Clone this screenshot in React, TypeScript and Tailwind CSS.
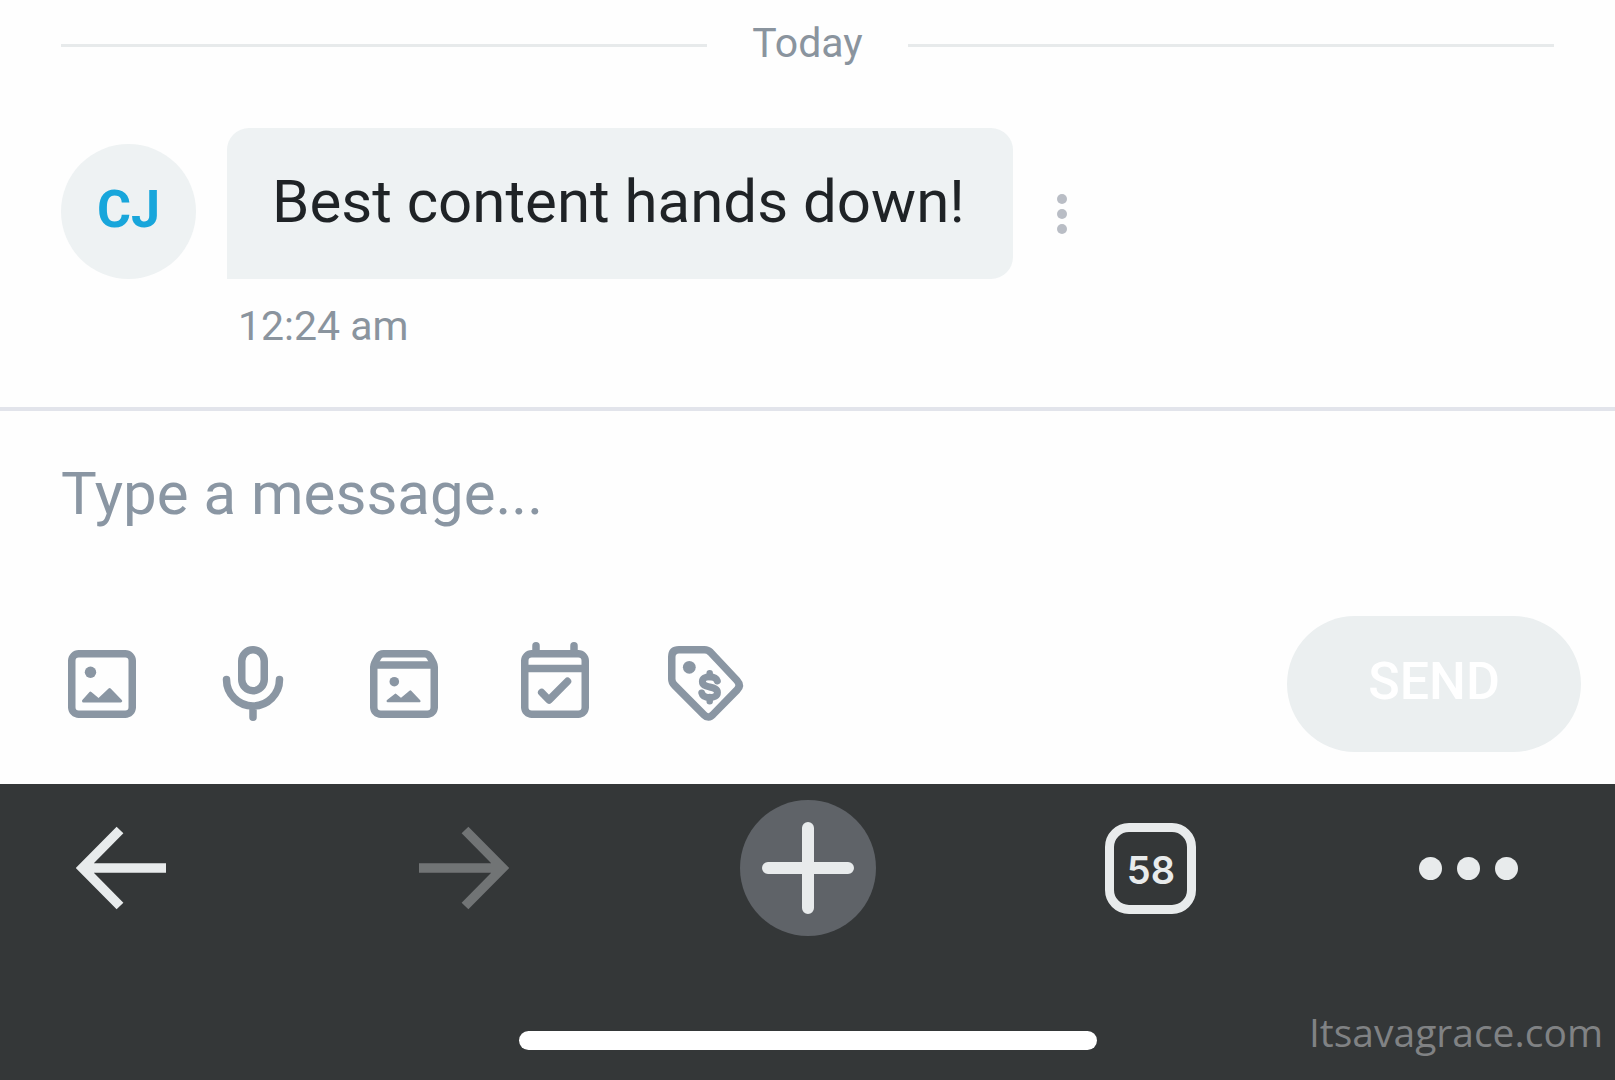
import type { ReactNode } from "react";

function ToolIcon({ children }: { children: ReactNode }) {
  return (
    <svg
      viewBox="0 0 90 90"
      className="size-[90px]"
      fill="none"
      stroke="currentColor"
      strokeWidth="7.5"
      strokeLinecap="round"
      strokeLinejoin="round"
      aria-hidden="true"
    >
      {children}
    </svg>
  );
}

const tools: { label: string; icon: ReactNode }[] = [
  {
    label: "Add photo",
    icon: (
      <ToolIcon>
        <rect x="14.75" y="14.75" width="60.5" height="60.5" rx="7" />
        <circle cx="33.5" cy="33.3" r="5.7" fill="currentColor" stroke="none" />
        <path d="M26.5 62 L33.4 54.2 L41.5 61 L52.6 50.6 L63.7 62 Z" fill="currentColor" strokeWidth="3" />
      </ToolIcon>
    ),
  },
  {
    label: "Record voice",
    icon: (
      <ToolIcon>
        <rect x="33.75" y="10.75" width="22.5" height="41" rx="11.25" />
        <path d="M18.5 40.5 a26.5 26.5 0 0 0 53 0 M45 67 V78.3" />
      </ToolIcon>
    ),
  },
  {
    label: "Add from vault",
    icon: (
      <ToolIcon>
        <path d="M14.75 28 Q14.75 26 15.7 24 L19 17.8 Q20.8 14.75 24.5 14.75 H65.5 Q69.2 14.75 71 17.8 L74.3 24 Q75.25 26 75.25 28 V68.25 a7 7 0 0 1 -7 7 H21.75 a7 7 0 0 1 -7 -7 Z" />
        <path d="M16 26 H74" />
        <circle cx="35.3" cy="42.7" r="4.8" fill="currentColor" stroke="none" />
        <path d="M28.8 62 L36.5 55.9 L42 60.5 L51.3 52.6 L60.3 62 Z" fill="currentColor" strokeWidth="2.5" />
      </ToolIcon>
    ),
  },
  {
    label: "Schedule message",
    icon: (
      <ToolIcon>
        <rect x="14.75" y="14.75" width="60.5" height="60.5" rx="7" />
        <path d="M16 29.5 H74 M26 6.8 V13 M64 6.8 V13 M31.7 53.5 L39 61 L57.5 42.3" />
      </ToolIcon>
    ),
  },
  {
    label: "Set price",
    icon: (
      <ToolIcon>
        <path d="M18 10.75 H43.5 Q47 10.75 49.5 13.2 L76 41.5 Q80.5 46.5 76 51 L52 75.5 Q47.5 80.5 43 75.8 L13.3 46 Q10.75 43.3 10.75 40 V18 Q10.75 10.75 18 10.75 Z" />
        <circle cx="28.3" cy="28.3" r="6.4" fill="currentColor" stroke="none" />
        <path
          d="M56.3 42 C55.2 38.8 52.3 37.8 48.7 37.8 C44.5 37.8 41.4 39.4 41.4 42.6 C41.4 46.4 45 47.1 48.7 48 C53 49 56.4 50 56.4 53.4 C56.4 56.8 53 58.5 48.7 58.5 C44.5 58.5 41.5 57 40.8 54"
          strokeWidth="7"
        />
        <path d="M48.7 34.2 V38 M48.7 58 V62.2" strokeWidth="6.5" />
      </ToolIcon>
    ),
  },
];

function Arrow({ className }: { className: string }) {
  return (
    <svg viewBox="0 0 90 84" className={className} fill="none" stroke="currentColor" strokeWidth="9.5" aria-hidden="true">
      <path d="M90 42 H8 M44 4 L6.5 42 L44 80" />
    </svg>
  );
}

export default function App() {
  return (
    <div className="relative flex min-h-screen flex-col bg-[#fefefe] font-['Roboto',sans-serif]">
      <main className="px-[61px] pt-[19px] pb-[57px]">
        <div className="flex items-center gap-[45px]">
          <div className="h-[3px] flex-1 bg-[#e7eaeb]" />
          <span className="pb-1 text-[41px] leading-[48px] text-[#8a949e]">Today</span>
          <div className="h-[3px] flex-1 bg-[#e7eaeb]" />
        </div>

        <div className="mt-[57px] flex items-end">
          <div className="flex size-[135px] shrink-0 items-center justify-center rounded-full bg-[#eef2f3] pb-1 text-[52px] leading-[60px] font-bold text-[#18a6db]">
            CJ
          </div>
          <p className="ml-[31px] rounded-[22px] rounded-bl-none bg-[#eef2f3] pt-[38px] pr-12 pb-[42px] pl-[45px] text-[60px] leading-[71px] text-[#1f2326]">
            Best content hands down!
          </p>
          <button type="button" aria-label="Message options" className="ml-[34px] flex h-[130px] w-[30px] flex-col items-center justify-center gap-[5px]">
            <span className="size-[10px] rounded-full bg-[#b9bdc5]" />
            <span className="size-[10px] rounded-full bg-[#b9bdc5]" />
            <span className="size-[10px] rounded-full bg-[#b9bdc5]" />
          </button>
        </div>
        <time className="mt-[23px] ml-[177px] block text-[41px] leading-[48px] text-[#8a949e]">12:24 am</time>
      </main>

      <form className="border-t-4 border-[#e2e4eb] pt-12 pb-8" onSubmit={(e) => e.preventDefault()}>
        <div className="px-[61px]">
          <input
            type="text"
            aria-label="Message"
            placeholder="Type a message..."
            className="block h-[70px] w-full bg-transparent text-[60px] leading-[70px] text-[#1f2326] outline-none placeholder:text-[#8a96a3]"
          />
        </div>
        <div className="mt-[87px] flex items-center justify-between pr-[34px] pl-[57px]">
          <div className="flex gap-[61px] text-[#8a96a3]">
            {tools.map((tool) => (
              <button key={tool.label} type="button" aria-label={tool.label}>
                {tool.icon}
              </button>
            ))}
          </div>
          <button
            type="submit"
            className="h-[136px] w-[294px] rounded-full bg-[#ebeff0] pb-1 text-[52px] leading-[60px] font-medium text-white"
          >
            SEND
          </button>
        </div>
      </form>

      <footer className="flex flex-1 flex-col bg-[#343738] pt-4 pb-[30px] text-[#e8ebec]">
        <nav aria-label="Browser" className="flex items-center pr-[79px] pl-[53px]">
          <div className="flex flex-1 items-center justify-between">
            <button type="button" aria-label="Back" className="flex size-[136px] items-center justify-center">
              <Arrow className="h-[84px] w-[90px]" />
            </button>
            <button type="button" aria-label="Forward" className="flex size-[136px] items-center justify-center text-[#717475]">
              <Arrow className="h-[84px] w-[90px] rotate-180" />
            </button>
            <button type="button" aria-label="New tab" className="flex size-[136px] items-center justify-center rounded-full bg-[#5f6368]">
              <svg viewBox="0 0 92 92" className="size-[92px]" stroke="currentColor" strokeWidth="12" strokeLinecap="round" aria-hidden="true">
                <path d="M46 6 V86 M6 46 H86" />
              </svg>
            </button>
            <button type="button" aria-label="58 open tabs" className="flex size-[136px] items-center justify-center">
              <span className="flex size-[91px] items-center justify-center rounded-[24px] border-9 border-[#e8ebec] pt-1 font-['Inter',sans-serif] text-[38px] leading-none font-semibold">
                58
              </span>
            </button>
          </div>
          <button type="button" aria-label="More" className="ml-[181px] flex h-[136px] w-[136px] items-center justify-center gap-[15px]">
            <span className="size-[23px] rounded-full bg-[#e8ebec]" />
            <span className="size-[23px] rounded-full bg-[#e8ebec]" />
            <span className="size-[23px] rounded-full bg-[#e8ebec]" />
          </button>
        </nav>
        <div className="mt-auto h-[19px] w-[578px] self-center rounded-full bg-white" />
      </footer>

      <span className="absolute right-3 bottom-[21px] font-['Open_Sans',sans-serif] text-[39px] leading-[54px] text-[#808284]">
        Itsavagrace.com
      </span>
    </div>
  );
}
